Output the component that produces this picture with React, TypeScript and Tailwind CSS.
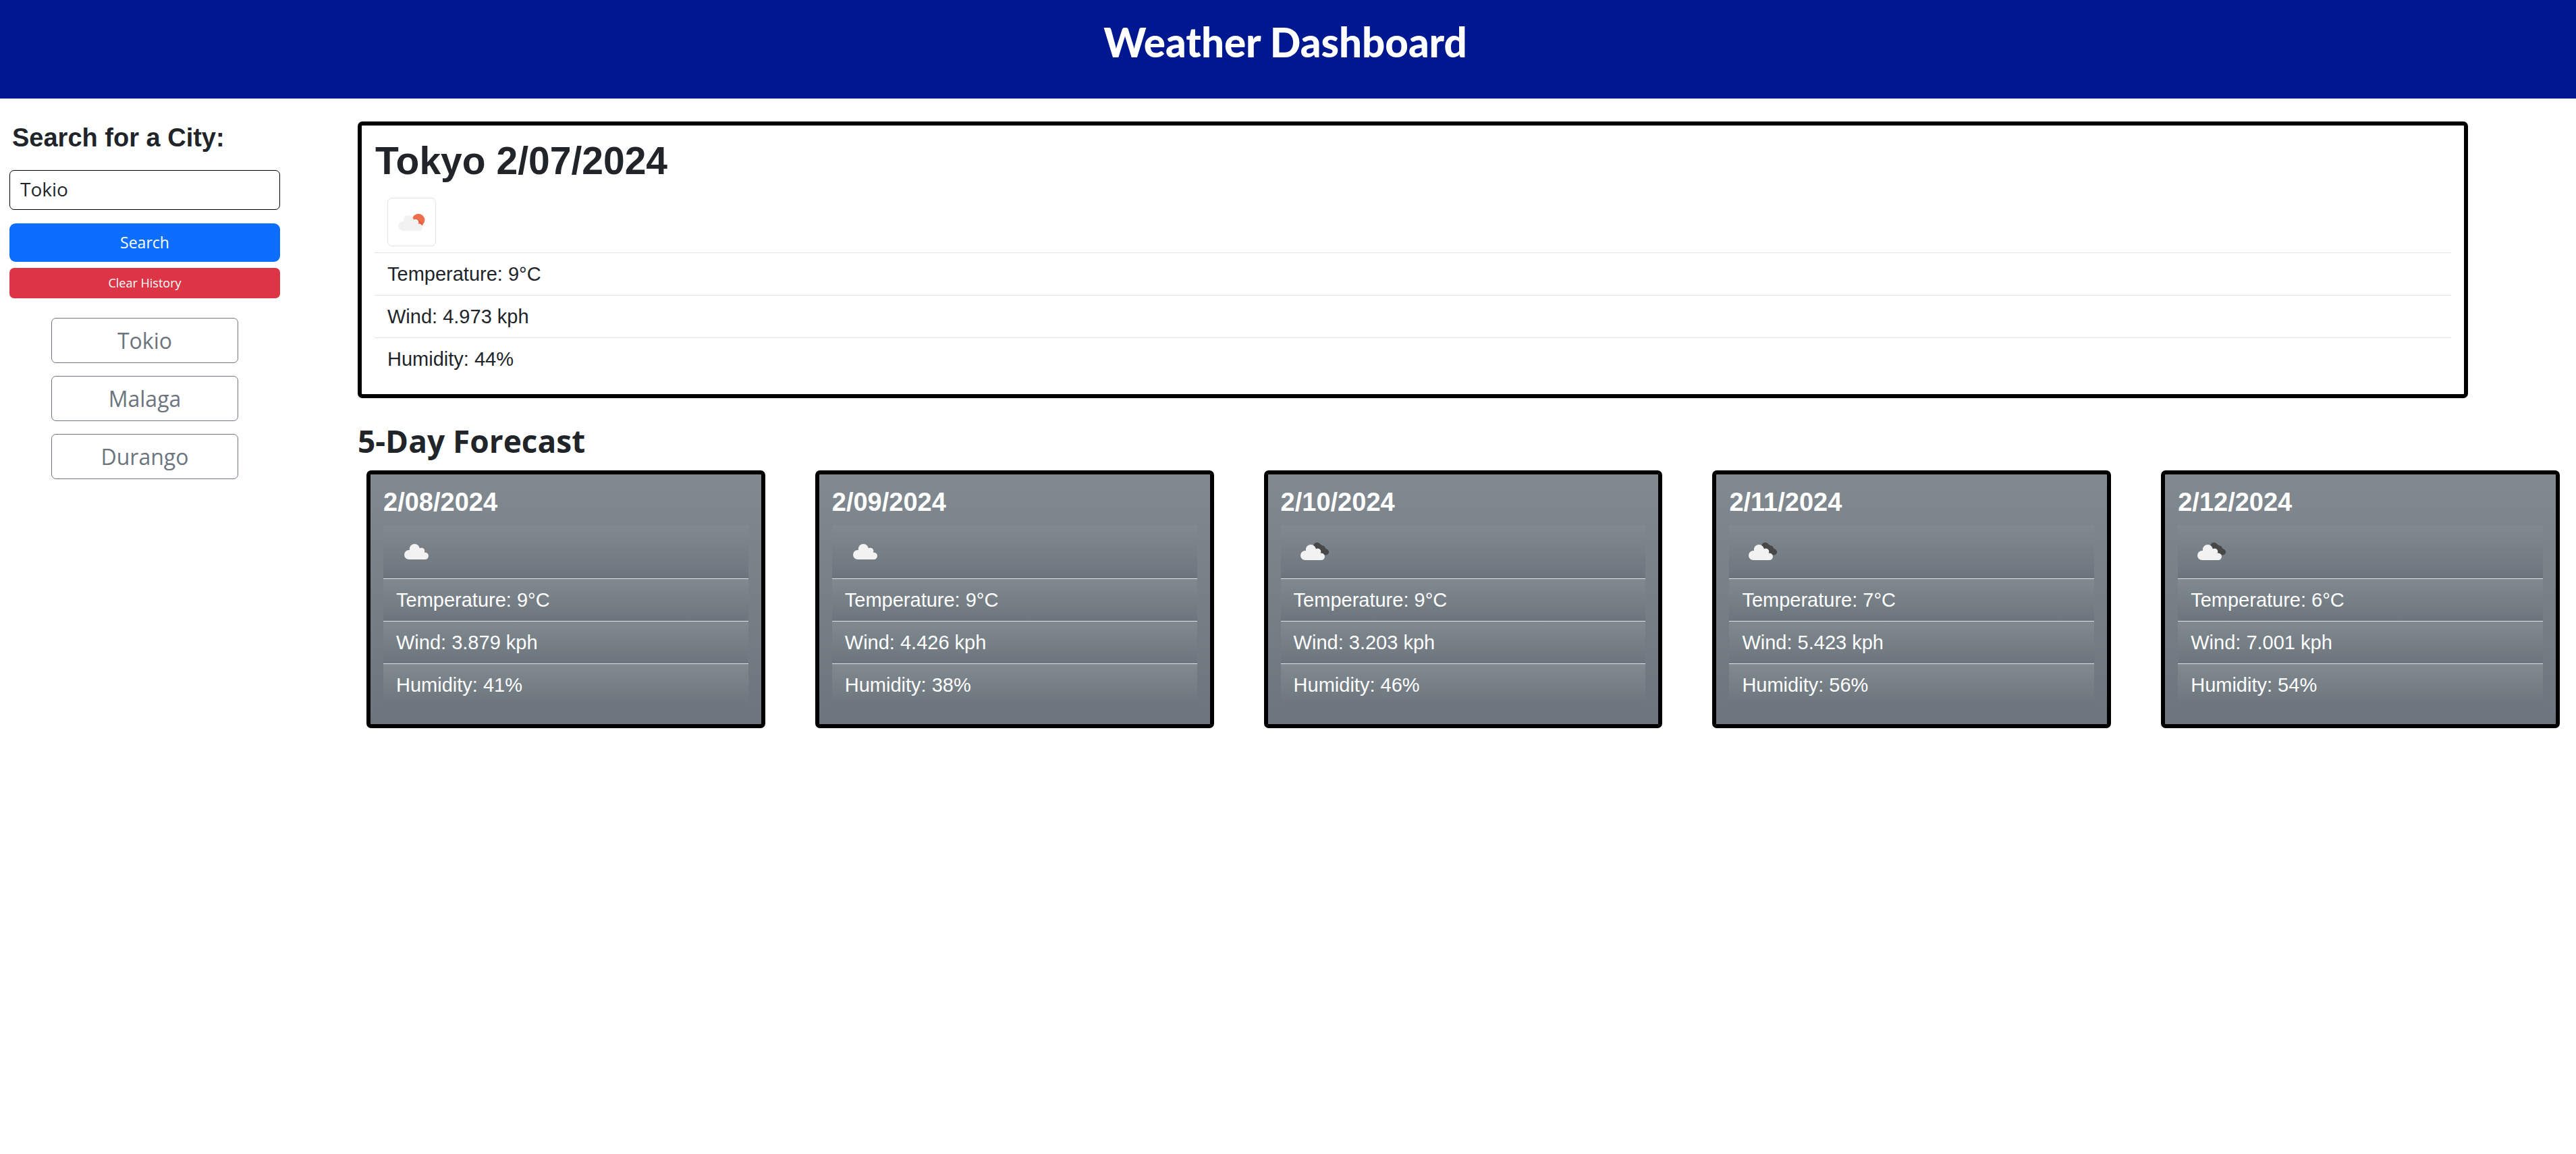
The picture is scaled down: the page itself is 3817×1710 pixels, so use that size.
type Condition = "cloud" | "broken" | "sun";

interface Day {
  date: string;
  icon: Condition;
  temp: number;
  wind: string;
  humidity: number;
}

const days: Day[] = [
  { date: "2/08/2024", icon: "cloud", temp: 9, wind: "3.879", humidity: 41 },
  { date: "2/09/2024", icon: "cloud", temp: 9, wind: "4.426", humidity: 38 },
  { date: "2/10/2024", icon: "broken", temp: 9, wind: "3.203", humidity: 46 },
  { date: "2/11/2024", icon: "broken", temp: 7, wind: "5.423", humidity: 56 },
  { date: "2/12/2024", icon: "broken", temp: 6, wind: "7.001", humidity: 54 },
];

const history = ["Tokio", "Malaga", "Durango"];

function Cloud({ x, y }: { x: number; y: number }) {
  return (
    <g transform={`translate(${x} ${y})`} fill="#f2f2f2">
      <circle cx="7" cy="16" r="7" />
      <circle cx="15.3" cy="7.5" r="7.5" />
      <circle cx="25.5" cy="10.5" r="4.8" />
      <circle cx="30.8" cy="17.8" r="5.2" />
      <path d="M7 23V9.500L22 6L27 12.600L31 14V23Z" />
    </g>
  );
}

function WeatherIcon({ kind }: { kind: Condition }) {
  return (
    <svg viewBox="0 0 60 60" className="block size-[60px]" aria-hidden="true">
      {kind === "sun" && (
        <>
          <circle cx="40" cy="27" r="9.300" fill="#ec6e4c" />
          <path d="M32 26.500Q38 24 41 29.500Q45 30 45.500 35" fill="none" stroke="#e4552f" strokeWidth="1.500" />
          <Cloud x={10} y={20} />
        </>
      )}
      {kind === "broken" && (
        <>
          <g fill="#484848">
            <circle cx="34.500" cy="21" r="5.300" />
            <circle cx="42.500" cy="24.500" r="4" />
            <circle cx="47.700" cy="30" r="4.400" />
            <path d="M30 22L38 17.500L45 22.500L49 26L46.500 34.500L38 32Z" />
          </g>
          <Cloud x={10} y={19} />
        </>
      )}
      {kind === "cloud" && <Cloud x={12} y={18} />}
    </svg>
  );
}

const row = "border-t px-[19px] py-[10px] text-[29px] leading-[42px]";
const tint = "bg-[linear-gradient(180deg,rgba(255,255,255,0.15),rgba(255,255,255,0))]";

export default function App() {
  return (
    <div className="min-h-screen bg-white font-['Open_Sans','Noto_Sans',sans-serif] text-[#212529]">
      <header className="bg-[#00188f] pt-[28px] pr-[8px] pb-[49px]">
        <h1 className="text-center font-['Gill_Sans_MT','Lato','Open_Sans',sans-serif] text-[60px] leading-[69px] font-black text-white">
          Weather Dashboard
        </h1>
      </header>
      <div className="flex">
        <aside className="w-[530px] shrink-0 pt-[35px] pr-[115px] pl-[14px]">
          <form onSubmit={(e) => e.preventDefault()}>
            <label
              htmlFor="city"
              className="block px-[4px] font-['Liberation_Sans',Arial,sans-serif] text-[38px] leading-[46px] font-bold"
            >
              Search for a City:
            </label>
            <input
              id="city"
              type="text"
              defaultValue="Tokio"
              className="mt-[25px] block h-[59px] w-full rounded-[7px] border border-black bg-white px-[15px] pb-[3px] text-[28px]"
            />
            <button
              type="submit"
              className="mt-[20px] block h-[57px] w-full rounded-[9px] bg-[#0d6efd] text-[23px] text-white"
            >
              Search
            </button>
            <button
              type="button"
              className="mt-[9px] block h-[45px] w-full rounded-[7px] bg-[#dc3545] text-[18px] text-white"
            >
              Clear History
            </button>
          </form>
          <div className="mt-[29px] flex flex-col gap-[19px] px-[62px]">
            {history.map((c) => (
              <button
                key={c}
                type="button"
                className="h-[67px] w-full rounded-[7px] border border-[#6c757d] text-[32px] text-[#6c757d]"
              >
                {c}
              </button>
            ))}
          </div>
        </aside>
        <main className="min-w-0 grow pt-[34px] pr-[24px]">
          <section className="mr-[136px] rounded-[7px] border-6 border-black px-[19px] pt-[19px] pb-[21px] font-['Liberation_Sans',Arial,sans-serif]">
            <h2 className="px-[1px] text-[57px] leading-[66px] font-bold">Tokyo 2/07/2024</h2>
            <ul className="pt-[13px]">
              <li className="px-[19px] py-[9px]">
                <div className="flex size-[72px] items-center justify-center rounded-[7px] border border-[#dee2e6]">
                  <WeatherIcon kind="sun" />
                </div>
              </li>
              <li className={`${row} border-[#dee2e6]`}>Temperature: 9°C</li>
              <li className={`${row} border-[#dee2e6]`}>Wind: 4.973 kph</li>
              <li className={`${row} border-[#dee2e6]`}>Humidity: 44%</li>
            </ul>
          </section>
          <h2 className="mt-[34px] text-[46px] leading-[58px] font-bold">5-Day Forecast</h2>
          <div className="mt-[15px] ml-[13px] grid grid-cols-5 gap-[74px]">
            {days.map((d) => (
              <article
                key={d.date}
                className={`${tint} rounded-[7px] border-6 border-black bg-[#6c757d] px-[19px] pt-[19px] pb-[27px] font-['Liberation_Sans',Arial,sans-serif] text-white`}
              >
                <h3 className="text-[38px] leading-[44px] font-bold">{d.date}</h3>
                <ul className="mt-[12px]">
                  <li className={`${tint} bg-[#6c757d] px-[19px] pt-[10px] pb-[9px]`}>
                    <WeatherIcon kind={d.icon} />
                  </li>
                  <li className={`${row} ${tint} border-[#dee2e6] bg-[#6c757d]`}>Temperature: {d.temp}°C</li>
                  <li className={`${row} ${tint} border-[#dee2e6] bg-[#6c757d]`}>Wind: {d.wind} kph</li>
                  <li className={`${row} ${tint} border-[#dee2e6] bg-[#6c757d]`}>Humidity: {d.humidity}%</li>
                </ul>
              </article>
            ))}
          </div>
        </main>
      </div>
    </div>
  );
}
